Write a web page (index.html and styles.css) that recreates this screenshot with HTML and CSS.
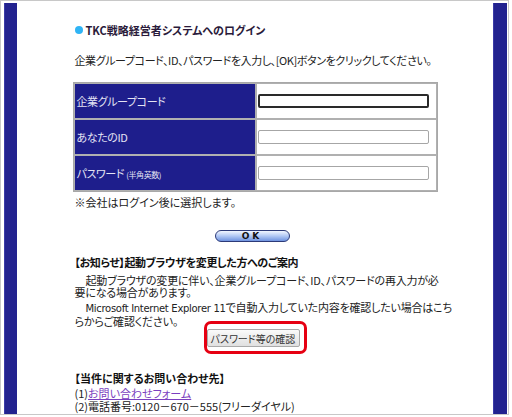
FILE: index.html
```html
<!DOCTYPE html>
<html lang="ja">
<head>
<meta charset="utf-8">
<title>TKC戦略経営者システムへのログイン</title>
<link rel="stylesheet" href="styles.css">
</head>
<body>
<div class="frame">
  <div class="bar bar-left"></div>
  <div class="main">
    <div class="content">
      <h1 class="title"><span class="dot"></span>TKC戦略経営者システムへのログイン</h1>
      <p class="lead">企業グループコード、ID、パスワードを入力し、[OK]ボタンをクリックしてください。</p>
      <table class="login">
        <tr>
          <th>企業グループコード</th>
          <td><input class="field focused" type="text"></td>
        </tr>
        <tr>
          <th>あなたのID</th>
          <td><input class="field" type="text"></td>
        </tr>
        <tr>
          <th>パスワード <small>(半角英数)</small></th>
          <td><input class="field" type="password"></td>
        </tr>
      </table>
      <p class="note">※会社はログイン後に選択します。</p>
      <div class="ok-row"><button class="ok" type="button">OK</button></div>
      <h2 class="heading">【お知らせ】起動ブラウザを変更した方へのご案内</h2>
      <p class="para">起動ブラウザの変更に伴い、企業グループコード、ID、パスワードの再入力が必<br>要になる場合があります。</p>
      <p class="para para2"><span class="latin">Microsoft Internet Explorer 11</span>で自動入力していた内容を確認したい場合はこち<br>らからご確認ください。</p>
      <div class="confirm-row">
        <div class="confirm-box"><button class="confirm" type="button">パスワード等の確認</button></div>
      </div>
      <h2 class="heading heading2">【当件に関するお問い合わせ先】</h2>
      <p class="contact">(1)<a href="#">お問い合わせフォーム</a></p>
      <p class="contact">(2)電話番号:0120－670－555(フリーダイヤル)</p>
    </div>
  </div>
  <div class="bar bar-right"></div>
</div>
</body>
</html>
```
FILE: styles.css
```css
html, body {
  margin: 0;
  padding: 0;
  background: #ffffff;
}
body {
  font-family: "Noto Sans CJK JP", sans-serif;
  font-feature-settings: "palt";
  font-size: 11px;
  color: #222;
}
.frame {
  box-sizing: border-box;
  width: 509px;
  height: 415px;
  border: 1px solid #c8c8c8;
  padding: 2px 1px 0 3px;
  display: flex;
  overflow: hidden;
}
.bar {
  background: #22228f;
  box-shadow: inset 1px 0 0 #3a3aa6;
}
.bar-left { width: 13px; }
.bar-right { width: 14px; }
.main {
  flex: 1;
  min-width: 0;
}
.content {
  width: 365px;
  margin: 0 auto;
}
.title {
  margin: 20px 0 0;
  padding-left: 2px;
  font-size: 11px;
  line-height: 14px;
  font-weight: bold;
  color: #2a1a3a;
  display: flex;
  align-items: center;
}
.dot {
  width: 8px;
  height: 8px;
  border-radius: 50%;
  background: #2fb4f5;
  margin-right: 3px;
}
.lead {
  margin: 16px 0 0;
  padding-left: 2px;
  line-height: 14px;
  color: #222;
  white-space: nowrap;
  letter-spacing: -0.4px;
}
.login {
  margin-top: 15px;
  border: 1px solid #a8a8a8;
  border-spacing: 0;
  width: 365px;
}
.login th, .login td {
  border: 1px solid #b0b0b0;
  height: 34px;
  padding: 0;
}
.login th {
  width: 178px;
  background: #1e1e8c;
  color: #e4e4f4;
  font-weight: normal;
  text-align: left;
  padding-left: 2px;
  letter-spacing: -0.4px;
}
.login th small {
  font-size: 8px;
}
.login td {
  padding-left: 1px;
}
.field {
  box-sizing: border-box;
  display: block;
  width: 171px;
  height: 14px;
  border: 1px solid #a6a6a6;
  border-radius: 2px;
  padding: 0;
  margin: 0;
  background: #fff;
}
.field.focused {
  border: 2px solid #2a2a2a;
}
.note {
  margin: 3px 0 0;
  padding-left: 2px;
  line-height: 14px;
}
.ok-row {
  margin-top: 21px;
  display: flex;
  justify-content: center;
  padding-right: 6px;
}
.ok {
  width: 75px;
  height: 12px;
  padding: 0;
  border: 1px solid #2c3a78;
  border-radius: 6px;
  background: linear-gradient(#f2f6ff 0%, #b8cdf6 45%, #6f93e0 100%);
  font-family: "DejaVu Sans", sans-serif;
  font-size: 9px;
  font-weight: bold;
  letter-spacing: 3px;
  line-height: 10px;
  color: #111;
}
.heading {
  margin: 13px 0 0;
  padding-left: 2px;
  font-size: 11px;
  line-height: 14px;
  font-weight: bold;
  color: #111;
  letter-spacing: -0.4px;
}
.para {
  margin: 5px 0 0;
  padding: 0 0 0 2px;
  text-indent: 11px;
  line-height: 12px;
  white-space: nowrap;
  letter-spacing: -0.2px;
}
.latin {
  font-family: "DejaVu Sans", sans-serif;
  font-size: 10px;
  letter-spacing: -0.3px;
}
.para2 {
  margin-top: 3px;
}
.confirm-row {
  display: flex;
  justify-content: center;
  margin-top: -6px;
}
.confirm-box {
  border: 3px solid #e60012;
  border-radius: 7px;
  padding: 5px 4px 4px 0;
}
.confirm {
  display: block;
  width: 93px;
  height: 18px;
  padding: 0;
  border: 1px solid #a9a9a9;
  border-radius: 2px;
  background: linear-gradient(#fafafa, #e0e0e0);
  font-family: "Noto Sans CJK JP", sans-serif;
  font-feature-settings: "palt";
  font-size: 10px;
  color: #333;
}
.heading2 {
  margin-top: 17px;
  letter-spacing: 0;
}
.contact {
  margin: 0;
  padding-left: 2px;
  line-height: 13px;
}
.heading2 + .contact {
  margin-top: 2px;
}
.contact a {
  color: #7b3fc0;
}
```
